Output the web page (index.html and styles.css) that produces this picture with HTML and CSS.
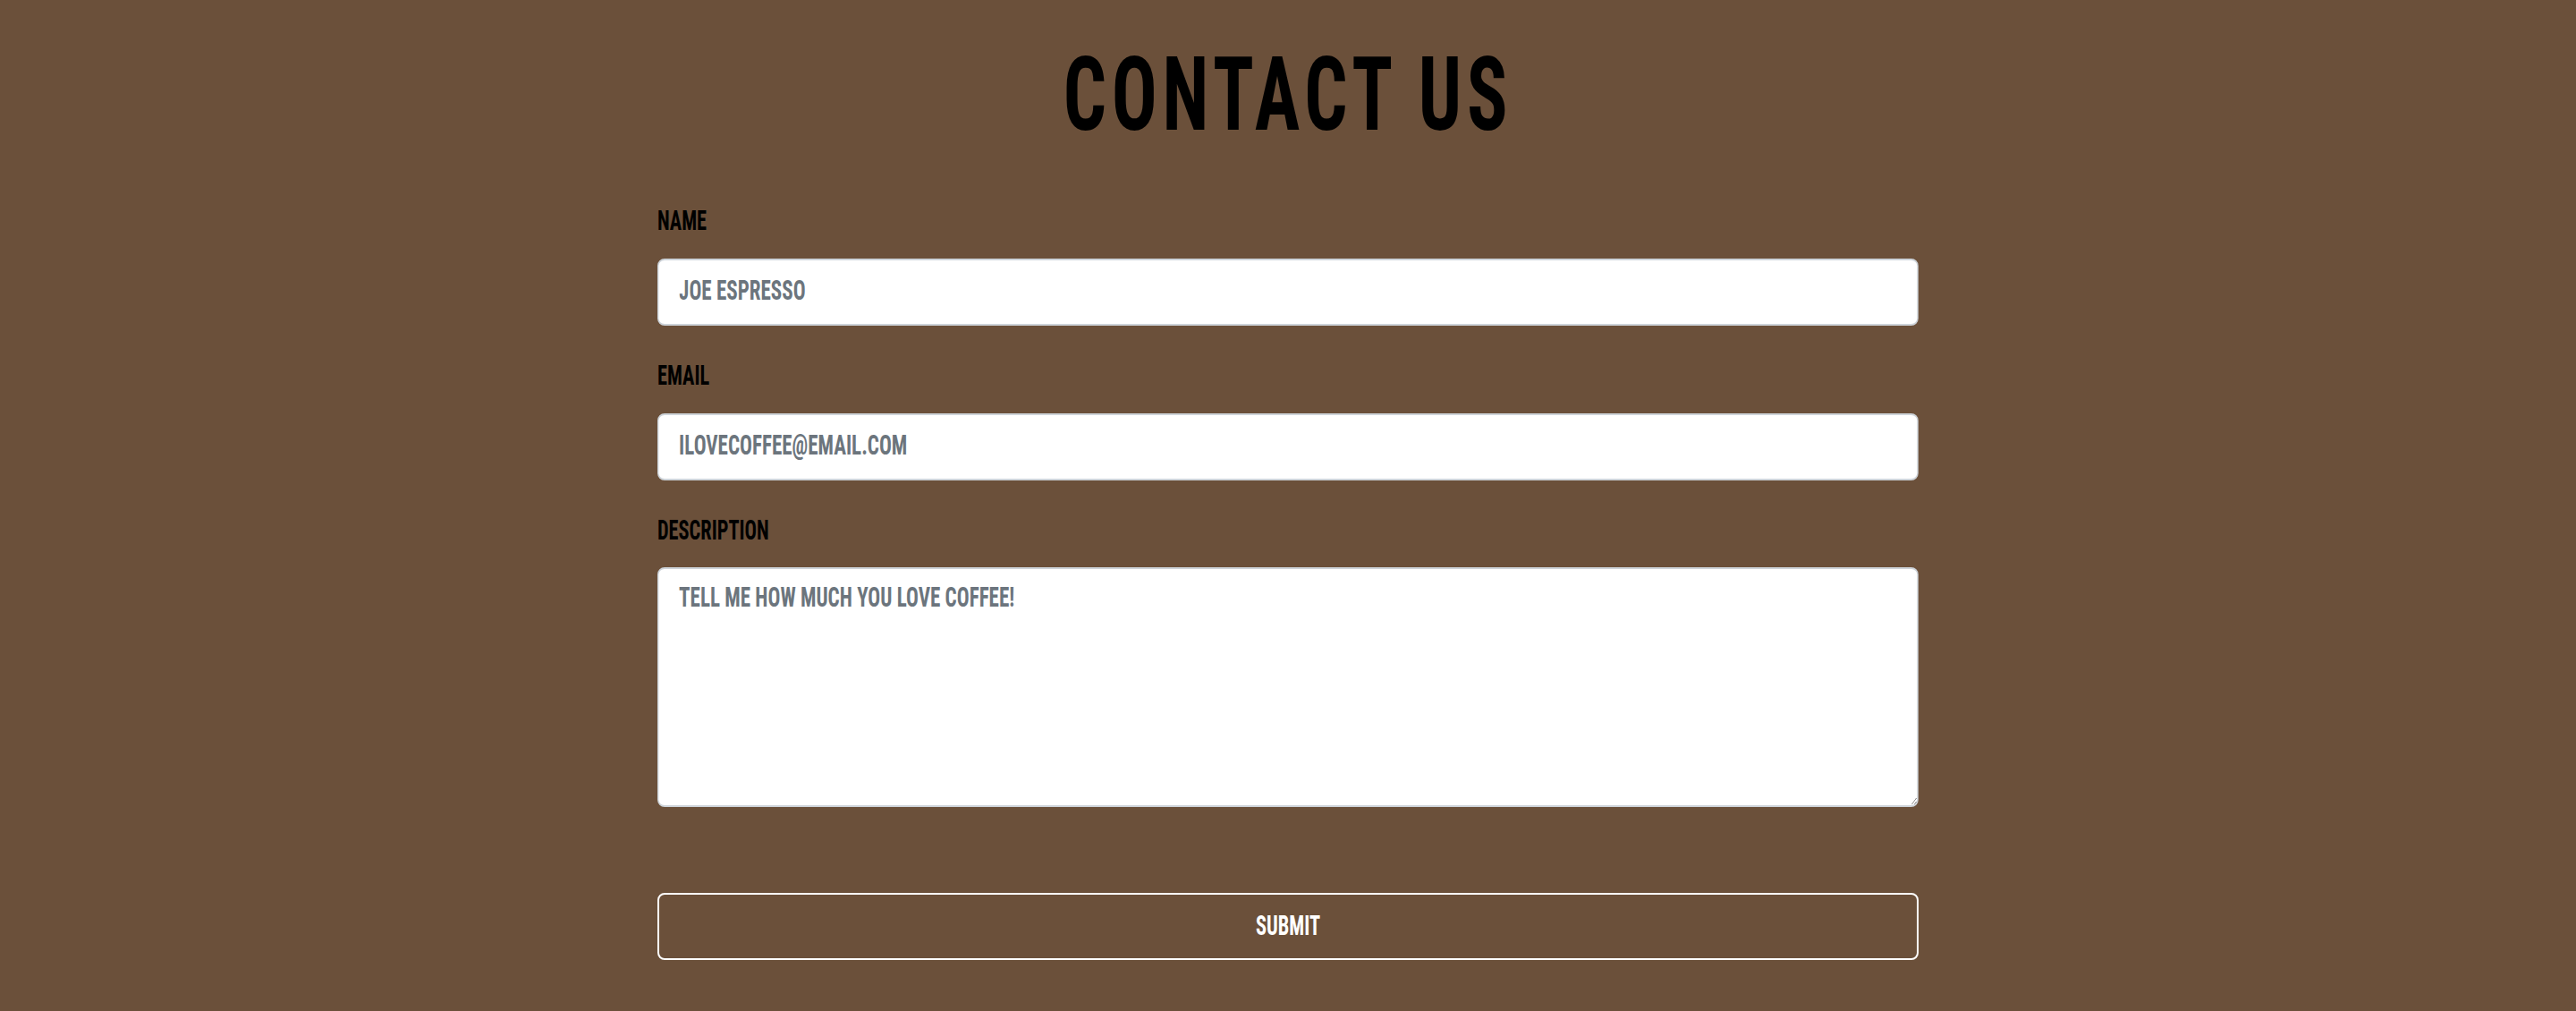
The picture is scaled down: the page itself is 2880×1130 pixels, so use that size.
FILE: index.html
```html
<!DOCTYPE html>
<html lang="en">
<head>
<meta charset="utf-8">
<title>Contact Us</title>
<link rel="stylesheet" href="styles.css">
</head>
<body>
<main class="page">
  <h1 class="title"><span class="narrow title-text">Contact Us</span></h1>
  <form class="contact-form">
    <div class="field">
      <label class="field-label" for="name"><span class="narrow narrow-left">Name</span></label>
      <input class="field-input" id="name" type="text" placeholder="Joe Espresso">
    </div>
    <div class="field">
      <label class="field-label" for="email"><span class="narrow narrow-left">Email</span></label>
      <input class="field-input" id="email" type="email" placeholder="ilovecoffee@email.com">
    </div>
    <div class="field">
      <label class="field-label" for="desc"><span class="narrow narrow-left">Description</span></label>
      <textarea class="field-input field-textarea" id="desc" placeholder="Tell me how much you love coffee!"></textarea>
    </div>
    <button class="submit-btn" type="button"><span class="narrow">Submit</span></button>
  </form>
</main>
</body>
</html>
```
FILE: styles.css
```css
* { box-sizing: border-box; }

:root {
  --squeeze: 0.72;
}

html, body {
  margin: 0;
  padding: 0;
  background: #6b503a;
}

body {
  font-family: "Roboto", "Open Sans", sans-serif;
  font-stretch: 75%;
  font-weight: 700;
  text-transform: uppercase;
  color: #000;
}

/* emulate the very condensed display face */
.narrow {
  display: inline-block;
  transform: scaleX(var(--squeeze));
  transform-origin: center;
}

.narrow-left {
  transform-origin: left center;
}

.page {
  display: flex;
  flex-direction: column;
  align-items: center;
  padding-top: 48px;
}

.title {
  margin: 0;
  font-size: 115px;
  line-height: 1;
  font-weight: 700;
  letter-spacing: 8px;
}

.title-text {
  transform: scaleX(0.735);
}

.contact-form {
  width: 1410px;
  display: flex;
  flex-direction: column;
  gap: 40px;
  margin-top: 68px;
}

.field {
  display: flex;
  flex-direction: column;
}

.field-label {
  font-size: 31px;
  line-height: 1;
  margin-bottom: 27px;
}

/* fields are drawn wide, then squeezed so their text matches the condensed face */
.field-input {
  width: calc(100% / 0.72);
  height: 75px;
  transform: scaleX(var(--squeeze));
  transform-origin: left top;
  border-style: solid;
  border-color: #ced4da;
  border-width: 2px 2.78px;
  border-radius: 11.1px / 8px;
  background: #fff;
  padding: 0 31.5px 5px;
  font-family: inherit;
  font-stretch: 75%;
  font-weight: 700;
  font-size: 32px;
  text-transform: uppercase;
  color: #495057;
  outline: none;
}

.field-input::placeholder {
  color: #6c757d;
  opacity: 1;
}

.field-textarea {
  height: 268px;
  margin-top: -1px;
  padding: 7px 31.5px;
  line-height: 1.5;
  resize: vertical;
}

.submit-btn {
  margin-top: 56px;
  height: 75px;
  width: 100%;
  padding: 0 0 3px;
  background: transparent;
  border: 2px solid #fff;
  border-radius: 8px;
  color: #fff;
  font-family: inherit;
  font-stretch: 75%;
  font-weight: 700;
  font-size: 31px;
  text-transform: uppercase;
  cursor: pointer;
}
```
